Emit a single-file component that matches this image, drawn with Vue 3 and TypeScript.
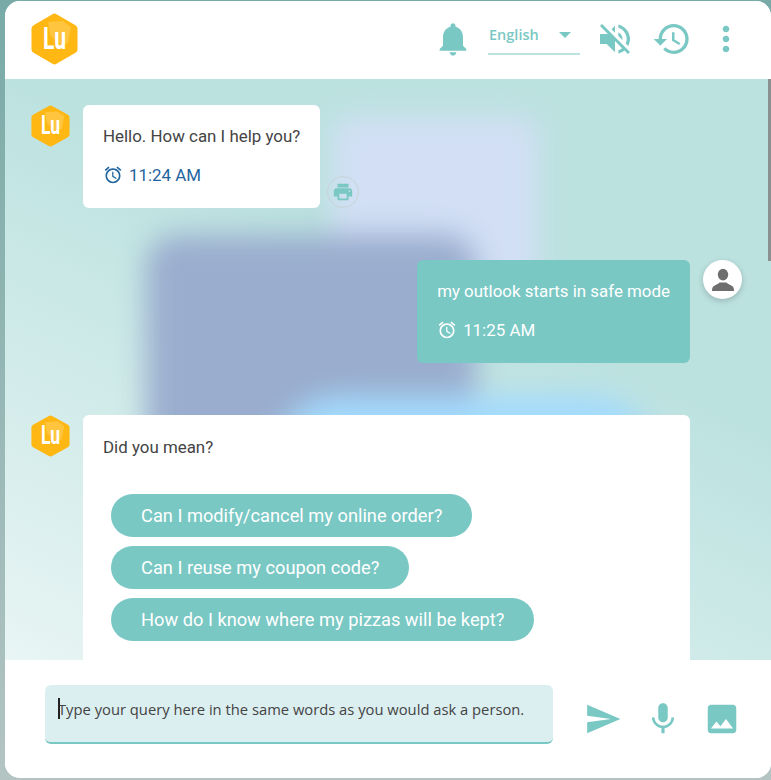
<script setup lang="ts">
import { ref } from 'vue'

interface IMessage {
  id: number
  from: 'bot' | 'user'
  text: string
  time?: string
  print?: boolean
  options?: string[]
}

const hexagon = 'M21.5 1.2a4 4 0 0 1 4 0l19 11a4 4 0 0 1 2 3.4v20.800a4 4 0 0 1-2 3.4l-19 11a4 4 0 0 1-4 0l-19-11a4 4 0 0 1-2-3.4V15.600a4 4 0 0 1 2-3.4z'
const shine = 'M17 9l15-1 8 6-3 16-8 2-10-10z'

const icons = {
  bell: 'M12 22c1.1 0 2-.9 2-2h-4c0 1.1.89 2 2 2zm6-6v-5c0-3.07-1.64-5.64-4.5-6.32V4c0-.83-.67-1.5-1.5-1.5s-1.5.67-1.5 1.5v.68C7.63 5.36 6 7.92 6 11v5l-2 2v1h16v-1l-2-2z',
  mute: 'M16.5 12c0-1.77-1.02-3.29-2.5-4.03v2.21l2.45 2.45c.03-.2.05-.41.05-.63zm2.5 0c0 .94-.2 1.82-.54 2.64l1.51 1.51C20.63 14.91 21 13.5 21 12c0-4.28-2.99-7.86-7-8.77v2.06c2.89.86 5 3.54 5 6.71zM4.27 3L3 4.27 7.73 9H3v6h4l5 5v-6.73l4.25 4.25c-.67.52-1.42.93-2.25 1.18v2.06c1.38-.31 2.63-.95 3.69-1.81L19.73 21 21 19.73l-9-9L4.27 3zM12 4L9.91 6.09 12 8.18V4z',
  history: 'M13 3c-4.97 0-9 4.03-9 9H1l3.89 3.89.07.14L9 12H6c0-3.87 3.13-7 7-7s7 3.13 7 7-3.13 7-7 7c-1.93 0-3.68-.79-4.94-2.06l-1.42 1.42C8.27 19.99 10.51 21 13 21c4.97 0 9-4.03 9-9s-4.03-9-9-9zm-1 5v5l4.28 2.54.72-1.21-3.5-2.08V8H12z',
  more: 'M12 8c1.1 0 2-.9 2-2s-.9-2-2-2-2 .9-2 2 .9 2 2 2zm0 2c-1.1 0-2 .9-2 2s.9 2 2 2 2-.9 2-2-.9-2-2-2zm0 6c-1.1 0-2 .9-2 2s.9 2 2 2 2-.9 2-2-.9-2-2-2z',
  alarm: 'M22 5.72l-4.6-3.86-1.29 1.53 4.6 3.86L22 5.72zM7.88 3.39L6.6 1.86 2 5.71l1.29 1.53 4.59-3.85zM12.5 8H11v6l4.75 2.85.75-1.23-4-2.37V8zM12 4c-4.97 0-9 4.03-9 9s4.02 9 9 9c4.97 0 9-4.03 9-9s-4.03-9-9-9zm0 16c-3.87 0-7-3.13-7-7s3.13-7 7-7 7 3.13 7 7-3.13 7-7 7z',
  print: 'M19 8H5c-1.66 0-3 1.34-3 3v6h4v4h12v-4h4v-6c0-1.66-1.34-3-3-3zm-3 11H8v-5h8v5zm3-7c-.55 0-1-.45-1-1s.45-1 1-1 1 .45 1 1-.45 1-1 1zm-1-9H6v4h12V3z',
  send: 'M2.01 21L23 12 2.01 3 2 10l15 2-15 2z',
  mic: 'M12 14c1.66 0 2.99-1.34 2.99-3L15 5c0-1.66-1.34-3-3-3S9 3.34 9 5v6c0 1.66 1.34 3 3 3zm5.3-3c0 3-2.54 5.1-5.3 5.1S6.7 14 6.7 11H5c0 3.41 2.72 6.23 6 6.72V21h2v-3.28c3.28-.48 6-3.3 6-6.72h-1.7z',
  image: 'M21 19V5c0-1.1-.9-2-2-2H5c-1.1 0-2 .9-2 2v14c0 1.1.9 2 2 2h14c1.1 0 2-.9 2-2zM8.5 13.5l2.5 3.01L14.5 12l4.5 6H5l3.5-4.5z'
}

const messages: IMessage[] = [
  { id: 1, from: 'bot', text: 'Hello. How can I help you?', time: '11:24 AM', print: true },
  { id: 2, from: 'user', text: 'my outlook starts in safe mode', time: '11:25 AM' },
  {
    id: 3,
    from: 'bot',
    text: 'Did you mean?',
    options: [
      'Can I modify/cancel my online order?',
      'Can I reuse my coupon code?',
      'How do I know where my pizzas will be kept?'
    ]
  }
]

const query = ref('')
</script>

<template>
  <div class="page">
    <main class="widget">
      <header class="top">
        <svg class="logo-big" viewBox="0 0 47 52">
          <path :d="hexagon" fill="#ffb713" />
          <path :d="shine" fill="#ffc53f" />
          <text x="12" y="36" class="logo-text" textLength="23" lengthAdjust="spacingAndGlyphs">Lu</text>
        </svg>
        <div class="top__tools">
          <svg class="icon-40" viewBox="0 0 24 24"><path :d="icons.bell" /></svg>
          <div class="lang">
            <span>English</span>
            <i class="lang__arrow"></i>
          </div>
          <svg class="icon-40" viewBox="0 0 24 24"><path :d="icons.mute" /></svg>
          <svg class="icon-40" viewBox="0 0 24 24"><path :d="icons.history" /></svg>
          <svg class="icon-40" viewBox="0 0 24 24"><path :d="icons.more" /></svg>
        </div>
      </header>

      <section class="chat">
        <div class="blob blob--pale"></div>
        <div class="blob blob--dark"></div>
        <div class="blob blob--bright"></div>
        <div class="scroll-thumb"></div>

        <div class="chat__list">
          <div v-for="msg in messages" :key="msg.id" class="row" :class="'row--' + msg.from">
            <svg v-if="msg.from === 'bot'" class="logo-small" viewBox="0 0 47 52" preserveAspectRatio="none">
              <path :d="hexagon" fill="#ffb713" />
              <path :d="shine" fill="#ffc53f" />
              <text x="12" y="36" class="logo-text" textLength="23" lengthAdjust="spacingAndGlyphs">Lu</text>
            </svg>
            <div class="bubble" :class="{ 'bubble--wide': msg.options, 'bubble--user': msg.from === 'user' }">
              <p class="bubble__text">{{ msg.text }}</p>
              <div v-if="msg.time" class="bubble__time">
                <svg viewBox="0 0 24 24"><path :d="icons.alarm" /></svg>
                <span>{{ msg.time }}</span>
              </div>
              <div v-if="msg.options" class="options">
                <button v-for="opt in msg.options" :key="opt" class="options__pill">{{ opt }}</button>
              </div>
            </div>
            <button v-if="msg.print" class="print">
              <svg viewBox="0 0 24 24"><path :d="icons.print" /></svg>
            </button>
            <div v-if="msg.from === 'user'" class="avatar">
              <svg viewBox="0 0 24 24">
                <ellipse cx="12" cy="6.600" rx="5.200" ry="5.800" />
                <path d="M1 23c0-1.500.2-3.500 1.500-4.700C4 17 7 16.400 8.500 14.500h7c1.500 1.900 4.500 2.500 6 3.800C22.800 19.500 23 21.500 23 23z" />
              </svg>
            </div>
          </div>
        </div>
      </section>

      <footer class="bottom">
        <div class="bottom__input">
          <i class="caret"></i>
          <input v-model="query" type="text" placeholder="Type your query here in the same words as you would ask a person." />
        </div>
        <svg class="icon-38 send" viewBox="0 0 24 24"><path :d="icons.send" /></svg>
        <svg class="icon-38 mic" viewBox="0 0 24 24"><path :d="icons.mic" /></svg>
        <svg class="icon-38 pic" viewBox="0 0 24 24"><path :d="icons.image" /></svg>
      </footer>
    </main>
  </div>
</template>

<style>
html,
body {
  margin: 0;
  padding: 0;
  overflow: hidden;
}
</style>

<style scoped>
.page {
  height: 780px;
  box-sizing: border-box;
  padding: 1px 0 2px 5px;
  background: linear-gradient(to bottom, #78aaa7, #b3c4c3);
  font-family: Roboto, "Liberation Sans", sans-serif;
}
.logo-text {
  font-family: Roboto, sans-serif;
  font-weight: 700;
  font-size: 31px;
  fill: #fff;
}
.widget {
  height: 100%;
  display: flex;
  flex-direction: column;
  border-radius: 15px;
  overflow: hidden;
  background: #fff;
}
.top {
  flex: 0 0 78px;
  box-sizing: border-box;
  padding: 0 25px 2px 26px;
  display: flex;
  align-items: center;
  justify-content: space-between;
  background: #fff;
}
.logo-big {
  width: 47px;
  height: 52px;
}
.top__tools {
  display: flex;
  align-items: center;
}
.icon-40 {
  width: 40px;
  height: 40px;
  fill: #79c8c4;
  flex: none;
}
.top__tools .icon-40:nth-of-type(2) {
  margin-left: 15px;
}
.top__tools .icon-40:nth-of-type(3) {
  margin-left: 17px;
}
.top__tools .icon-40:nth-of-type(4) {
  margin-left: 14px;
}
.lang {
  width: 92px;
  height: 39px;
  box-sizing: border-box;
  margin-left: 15px;
  margin-bottom: 7px;
  padding: 0 9px 0 1px;
  display: flex;
  align-items: center;
  justify-content: space-between;
  border-bottom: 2px solid #bce2e0;
  color: #79c8c4;
  font-family: "Open Sans", sans-serif;
  font-size: 14.5px;
  font-weight: 600;
}
.lang__arrow {
  width: 0;
  height: 0;
  border-left: 6px solid transparent;
  border-right: 6px solid transparent;
  border-top: 6px solid #79c8c4;
}
.chat {
  flex: 1;
  position: relative;
  overflow: hidden;
  background: linear-gradient(205deg, #bce2e0 0%, #bce2e0 38%, #e8f5f4 100%);
}
.blob {
  position: absolute;
  filter: blur(14px);
}
.blob--pale {
  left: 328px;
  top: 38px;
  width: 205px;
  height: 220px;
  border-radius: 16px;
  background: #d2dff5;
}
.blob--dark {
  left: 141px;
  top: 156px;
  width: 330px;
  height: 300px;
  border-radius: 30px;
  background: #9aadce;
}
.blob--bright {
  left: 266px;
  top: 316px;
  width: 388px;
  height: 200px;
  border-radius: 70px;
  background: #a3dafc;
}
.scroll-thumb {
  position: absolute;
  right: 0;
  top: 0;
  width: 3px;
  height: 182px;
  background: #8a8f90;
}
.chat__list {
  position: relative;
  padding-top: 26px;
  display: flex;
  flex-direction: column;
  gap: 52px;
}
.row {
  display: flex;
  gap: 13px;
}
.row--bot {
  padding: 0 81px 0 26px;
}
.row--user {
  justify-content: flex-end;
  padding-right: 29px;
}
.logo-small {
  width: 39px;
  height: 42px;
  flex: none;
}
.bubble {
  box-sizing: border-box;
  padding: 20px 20px 21px 20px;
  background: #fff;
  border-radius: 6px;
  color: #444;
  font-size: 16.9px;
}
.bubble--wide {
  flex: 1;
  padding-top: 21px;
}
.bubble--user {
  background: #79c8c4;
  color: #fff;
}
.bubble__text {
  margin: 0;
  line-height: 22px;
}
.bubble__time {
  margin-top: 16px;
  height: 24px;
  display: flex;
  align-items: center;
  gap: 6px;
  color: #1f659f;
}
.bubble--user .bubble__time {
  color: #fff;
}
.bubble__time svg {
  width: 20px;
  height: 20px;
  fill: currentColor;
}
.options {
  margin: 36px 0 40px 8px;
  display: flex;
  flex-direction: column;
  align-items: flex-start;
  gap: 9px;
}
.options__pill {
  height: 43px;
  padding: 0 30px;
  border: none;
  border-radius: 22px;
  background: #79c8c4;
  color: #fff;
  font-family: inherit;
  font-size: 18.25px;
  white-space: nowrap;
}
.print {
  align-self: flex-end;
  width: 32px;
  height: 32px;
  margin-left: -6px;
  padding: 0;
  display: flex;
  align-items: center;
  justify-content: center;
  border: 1px solid #c9d3d6;
  border-radius: 50%;
  background: transparent;
}
.print svg {
  width: 22px;
  height: 22px;
  fill: #79c8c4;
}
.avatar {
  width: 39px;
  height: 39px;
  display: flex;
  align-items: center;
  justify-content: center;
  border-radius: 50%;
  background: #fff;
  box-shadow: 0 2px 6px rgba(0, 0, 0, 0.2);
}
.avatar svg {
  width: 24px;
  height: 24px;
  fill: #6e6e6e;
}
.bottom {
  flex: 0 0 118px;
  box-sizing: border-box;
  padding: 25px 0 0 40px;
  display: flex;
  align-items: flex-start;
  background: #fff;
}
.bottom__input {
  position: relative;
  width: 508px;
  height: 59px;
  box-sizing: border-box;
  border-bottom: 2px solid #79c8c4;
  border-radius: 6px;
  background: #dbeef0;
}
.bottom__input input {
  width: 100%;
  height: 48px;
  box-sizing: border-box;
  padding: 0 12px 0 13px;
  border: none;
  outline: none;
  background: transparent;
  font-family: "Open Sans", sans-serif;
  font-size: 14.75px;
}
.bottom__input input::placeholder {
  color: #444;
  opacity: 1;
}
.caret {
  position: absolute;
  left: 13px;
  top: 13px;
  width: 2px;
  height: 21px;
  background: #222;
}
.icon-38 {
  width: 38px;
  height: 38px;
  margin-top: 15px;
  fill: #79c8c4;
  flex: none;
}
.send {
  margin-left: 31px;
}
.mic {
  margin-left: 22px;
}
.pic {
  margin-left: 21px;
}
</style>
